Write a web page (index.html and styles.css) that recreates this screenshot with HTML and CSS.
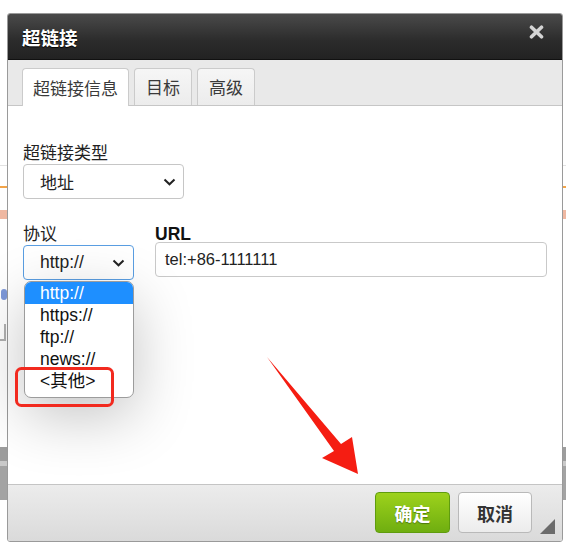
FILE: index.html
```html
<!DOCTYPE html>
<html lang="zh-CN">
<head>
<meta charset="utf-8">
<title>超链接</title>
<link rel="stylesheet" href="styles.css">
</head>
<body>
<div class="backdrop" aria-hidden="true">
  <div class="edge edge-left">
    <div class="bg-line"></div>
    <div class="bg-dash"></div>
    <div class="bg-salmon"></div>
    <div class="bg-blue"></div>
    <div class="bg-char"></div>
    <div class="bg-bar"></div>
  </div>
  <div class="edge edge-right">
    <div class="bg-line"></div>
    <div class="bg-dash"></div>
    <div class="bg-salmon"></div>
    <div class="bg-bar"></div>
  </div>
</div>

<div class="dialog">
  <div class="titlebar">
    <span class="title">超链接</span>
    <span class="close">
      <svg width="15" height="14" viewBox="0 0 15 14"><path d="M2.5 2.2 L12.5 11.8 M12.5 2.2 L2.5 11.8" stroke="#d4d4d4" stroke-width="3.6" stroke-linecap="round"/></svg>
    </span>
  </div>

  <div class="tabbar">
    <div class="tab active">超链接信息</div>
    <div class="tab">目标</div>
    <div class="tab">高级</div>
  </div>

  <div class="content">
    <div class="field">
      <div class="label">超链接类型</div>
      <div class="select type-select">
        <span>地址</span>
        <svg class="chev" width="13" height="8" viewBox="0 0 13 8"><path d="M1.5 1.5 L6.5 6.3 L11.5 1.5" fill="none" stroke="#222" stroke-width="2"/></svg>
      </div>
    </div>

    <div class="row">
      <div class="field proto">
        <div class="label">协议</div>
        <div class="select-wrap">
          <div class="select proto-select focus">
            <span class="latin">http://</span>
            <svg class="chev" width="13" height="8" viewBox="0 0 13 8"><path d="M1.5 1.5 L6.5 6.3 L11.5 1.5" fill="none" stroke="#222" stroke-width="2"/></svg>
          </div>
          <ul class="dropdown">
            <li class="hl">http://</li>
            <li>https://</li>
            <li>ftp://</li>
            <li>news://</li>
            <li>&lt;其他&gt;</li>
          </ul>
        </div>
      </div>
      <div class="field url">
        <div class="label url-label">URL</div>
        <div class="input">tel:+86-1111111</div>
      </div>
    </div>
  </div>

  <div class="footer">
    <button class="btn ok">确定</button>
    <button class="btn cancel">取消</button>
    <span class="resize"></span>
  </div>

  <svg class="annot" width="566" height="543" viewBox="0 0 566 543" aria-hidden="true">
    <rect x="16.5" y="368.5" width="96" height="37" rx="5" ry="5" fill="none" stroke="#f22a1f" stroke-width="3"/>
    <polygon points="267,357 341,444 352,437 358,474 322,458 334,451" fill="#f51d12"/>
  </svg>
</div>
</body>
</html>
```

FILE: styles.css
```css
html {
  margin: 0;
  padding: 0;
  background: #ffffff;
}

body {
  margin: 0;
  padding: 0;
  width: 566px;
  height: 543px;
  overflow: hidden;
  position: relative;
  font-family: "Noto Sans CJK SC", "Liberation Sans", sans-serif;
}

/* page behind the dialog: only its edges show */
.backdrop {
  position: absolute;
  inset: 0;
  z-index: 0;
}
.edge {
  position: absolute;
  top: 0;
  height: 543px;
  overflow: hidden;
}
.edge-left { left: 0; width: 7px; }
.edge-right { left: 563px; width: 3px; }

.bg-line,
.bg-dash,
.bg-salmon,
.bg-bar {
  position: absolute;
  left: 0;
  right: 0;
}
.bg-line {
  top: 165px;
  height: 1px;
  background: #e2e2e2;
}
.bg-dash {
  top: 186px;
  border-top: 2px dashed #f2a449;
}
.bg-salmon {
  top: 210px;
  height: 9px;
  background: #efb8a2;
}
.bg-blue {
  position: absolute;
  left: 1px;
  top: 289px;
  width: 6px;
  height: 11px;
  background: #7d98d8;
  border-radius: 3px;
}
.bg-char {
  position: absolute;
  left: 0;
  top: 324px;
  width: 4px;
  height: 15px;
  border-right: 2px solid #b0b0b0;
  border-bottom: 2px solid #b0b0b0;
}
.bg-bar {
  top: 447px;
  height: 53px;
  background: linear-gradient(#9d9d9d 0 14px, #c9c9c9 14px 19px, #a3a3a3 19px 100%);
}

/* dialog */
.dialog {
  position: relative;
  z-index: 1;
  margin: 13px 0 0 7px;
  width: 554px;
  border: 1px solid #9a9a9a;
  border-radius: 3px;
  background: #fff;
}

.titlebar {
  height: 45px;
  border-bottom: 1px solid #111;
  background: linear-gradient(#4a4a4a, #2b2b2b 60%, #222);
  border-radius: 2px 2px 0 0;
  display: flex;
  justify-content: space-between;
  align-items: center;
  padding: 0 18px 0 14px;
}
.title {
  color: #fff;
  font-size: 18.5px;
  font-weight: bold;
  text-shadow: 0 1px 1px #000;
  margin-top: 1px;
}
.close {
  align-self: flex-start;
  margin-top: 11px;
  display: block;
  height: 14px;
}
.close svg { display: block; }

.tabbar {
  height: 45px;
  background: #e9e9e9;
  border-bottom: 1px solid #c6c6c6;
  display: flex;
  align-items: flex-end;
  gap: 5px;
  padding-left: 14px;
}
.tab {
  height: 36px;
  padding: 0 11px;
  border: 1px solid #cbcbcb;
  border-bottom: none;
  border-radius: 4px 4px 0 0;
  background: linear-gradient(#f6f6f6, #ececec);
  color: #3a3a3a;
  font-size: 17px;
  line-height: 36px;
}
.tab.active {
  background: #fff;
  height: 37px;
  padding: 0 10px;
  margin-bottom: -1px;
  line-height: 37px;
}

.content {
  height: 342px;
  padding: 36px 15px 0 15px;
  background: #fff;
}

.label {
  font-size: 17px;
  line-height: 20px;
  color: #222;
}

.select {
  box-sizing: border-box;
  height: 35px;
  margin-top: 2px;
  border: 1px solid #c6c6c6;
  border-radius: 4px;
  background: #fff;
  display: flex;
  align-items: center;
  justify-content: space-between;
  padding: 0 7px 0 16px;
  font-size: 17px;
  color: #222;
}
.chev { display: block; }
.type-select { width: 161px; }

.latin {
  font-family: "Liberation Sans", "Noto Sans CJK SC", sans-serif;
  font-size: 17.5px;
}

.row {
  display: flex;
  gap: 21px;
  margin-top: 24px;
}
.proto { width: 111px; }
.select-wrap { position: relative; }
.proto-select {
  width: 111px;
  padding-right: 8px;
}
.focus {
  border-color: #5a9ee2;
}

.dropdown {
  position: absolute;
  left: 1px;
  top: calc(100% + 1px);
  width: 110px;
  box-sizing: border-box;
  margin: 0;
  padding: 0 0 5px 0;
  list-style: none;
  background: #fff;
  border: 1px solid #9c9c9c;
  border-radius: 7px;
  overflow: hidden;
  box-shadow: 0 18px 60px rgba(0, 0, 0, 0.24);
  z-index: 3;
}
.dropdown li {
  height: 22px;
  line-height: 22px;
  padding-left: 15px;
  font-family: "Liberation Sans", "Noto Sans CJK SC", sans-serif;
  font-size: 17.5px;
  color: #111;
}
.dropdown li.hl {
  background: #1e8fff;
  color: #fff;
}

.url { flex: 1; }
.url-label {
  font-family: "Liberation Sans", sans-serif;
  font-weight: bold;
  line-height: 18px;
  font-size: 17.5px;
  color: #111;
  margin-top: 2px;
}
.input {
  box-sizing: border-box;
  margin-top: -1px;
  height: 35px;
  width: 392px;
  border: 1px solid #c9c9c9;
  border-radius: 4px;
  padding-left: 9px;
  line-height: 33px;
  font-family: "Liberation Sans", sans-serif;
  font-size: 16.5px;
  color: #222;
}

.footer {
  position: relative;
  box-sizing: border-box;
  height: 57px;
  border-top: 1px solid #c4c4c4;
  background: linear-gradient(#ececec, #dadada);
  border-radius: 0 0 2px 2px;
  display: flex;
  justify-content: flex-end;
  align-items: flex-start;
  gap: 8px;
  padding: 7px 30px 0 0;
}
.btn {
  height: 41px;
  border-radius: 4px;
  font-family: "Noto Sans CJK SC", sans-serif;
  font-size: 18px;
  font-weight: bold;
  padding: 0;
  cursor: pointer;
}
.ok {
  width: 75px;
  color: #fff;
  border: 1px solid #5f9c0e;
  background: linear-gradient(#9dd21c, #6fae10);
  text-shadow: 0 1px 1px rgba(0, 0, 0, 0.35);
}
.cancel {
  width: 74px;
  color: #333;
  border: 1px solid #b9b9b9;
  background: linear-gradient(#ffffff, #ececec);
}
.resize {
  position: absolute;
  right: 7px;
  bottom: 7px;
  width: 0;
  height: 0;
  border-left: 15px solid transparent;
  border-bottom: 15px solid #6b6b6b;
}

.annot {
  position: absolute;
  left: -8px;
  top: -14px;
  pointer-events: none;
  z-index: 5;
}
```
